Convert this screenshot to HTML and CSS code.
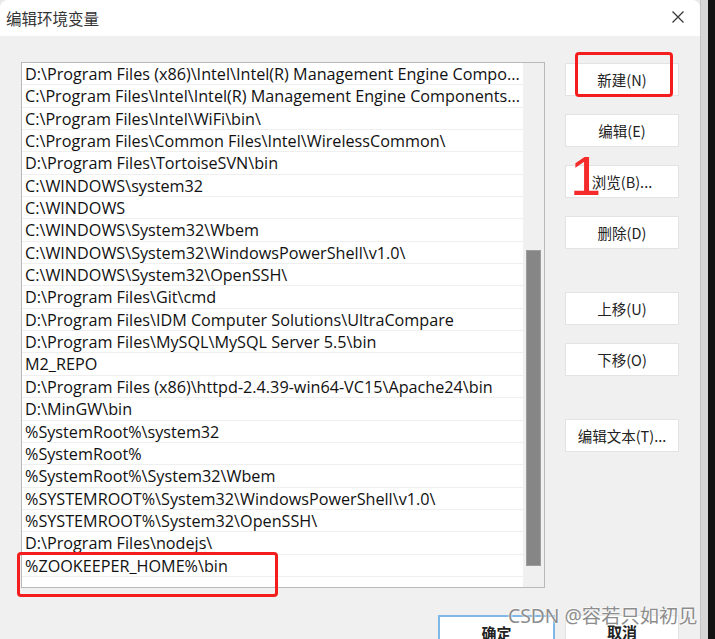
FILE: index.html
```html
<!DOCTYPE html>
<html lang="zh-CN">
<head>
<meta charset="utf-8">
<title>编辑环境变量</title>
<link rel="stylesheet" href="styles.css">
</head>
<body>
<div class="screen">
  <div class="dialog">
    <div class="titlebar">
      <span class="title">编辑环境变量</span>
      <svg class="close" width="12" height="12" viewBox="0 0 12 12"><path d="M0.5 0.5 L11.5 11.5 M11.5 0.5 L0.5 11.5" stroke="#3a3a3a" stroke-width="1.3" fill="none"/></svg>
    </div>
    <div class="body">
      <div class="main">
        <div class="list">
          <div class="rows">
            <div class="row">D:\Program Files (x86)\Intel\Intel(R) Management Engine Compo...</div>
            <div class="row">C:\Program Files\Intel\Intel(R) Management Engine Components...</div>
            <div class="row">C:\Program Files\Intel\WiFi\bin\</div>
            <div class="row">C:\Program Files\Common Files\Intel\WirelessCommon\</div>
            <div class="row">D:\Program Files\TortoiseSVN\bin</div>
            <div class="row">C:\WINDOWS\system32</div>
            <div class="row">C:\WINDOWS</div>
            <div class="row">C:\WINDOWS\System32\Wbem</div>
            <div class="row">C:\WINDOWS\System32\WindowsPowerShell\v1.0\</div>
            <div class="row">C:\WINDOWS\System32\OpenSSH\</div>
            <div class="row">D:\Program Files\Git\cmd</div>
            <div class="row">D:\Program Files\IDM Computer Solutions\UltraCompare</div>
            <div class="row">D:\Program Files\MySQL\MySQL Server 5.5\bin</div>
            <div class="row">M2_REPO</div>
            <div class="row">D:\Program Files (x86)\httpd-2.4.39-win64-VC15\Apache24\bin</div>
            <div class="row">D:\MinGW\bin</div>
            <div class="row">%SystemRoot%\system32</div>
            <div class="row">%SystemRoot%</div>
            <div class="row">%SystemRoot%\System32\Wbem</div>
            <div class="row">%SYSTEMROOT%\System32\WindowsPowerShell\v1.0\</div>
            <div class="row">%SYSTEMROOT%\System32\OpenSSH\</div>
            <div class="row">D:\Program Files\nodejs\</div>
            <div class="row">%ZOOKEEPER_HOME%\bin</div>
          </div>
          <div class="scrollbar"><div class="thumb"></div></div>
        </div>
        <div class="buttons">
          <div class="group">
            <div class="btn">新建(N)</div>
            <div class="btn">编辑(E)</div>
            <div class="btn">浏览(B)...</div>
            <div class="btn">删除(D)</div>
          </div>
          <div class="group">
            <div class="btn">上移(U)</div>
            <div class="btn">下移(O)</div>
          </div>
          <div class="group">
            <div class="btn">编辑文本(T)...</div>
          </div>
        </div>
      </div>
      <div class="footer">
        <div class="btn wide default">确定</div>
        <div class="btn">取消</div>
      </div>
    </div>
    <div class="mark mark-new"></div>
    <div class="mark mark-row"></div>
    <div class="digit">1</div>
    <div class="watermark">CSDN @容若只如初见</div>
  </div>
  <div class="edge"><div class="edge-gray"></div><div class="edge-black"></div></div>
</div>
</body>
</html>
```
FILE: styles.css
```css
* { box-sizing: border-box; }
html, body { margin: 0; padding: 0; }
body { background: #e9e9e9; }
.screen {
  width: 715px;
  height: 639px;
  overflow: hidden;
  display: flex;
  background: #e9e9e9;
}
.dialog {
  position: relative;
  width: 700px;
  height: 639px;
  display: flex;
  flex-direction: column;
  background: #f0f0f0;
  border-radius: 8px 8px 0 0;
  overflow: hidden;
}
.titlebar {
  height: 36px;
  flex: none;
  background: #ffffff;
  display: flex;
  align-items: center;
  justify-content: space-between;
  padding: 0 16px 0 6px;
}
.title {
  font-family: "Noto Sans CJK SC", sans-serif;
  font-size: 15.5px;
  color: #333333;
  letter-spacing: 0;
}
.close { display: block; margin-top: -2px; }
.body {
  flex: 1;
  padding: 26px 0 0 21px;
}
.main { display: flex; }
.list {
  width: 524px;
  height: 526px;
  border: 1px solid #b9b9b9;
  background: #ffffff;
  display: flex;
}
.rows {
  width: 501px;
  display: flex;
  flex-direction: column;
}
.row {
  height: 22.35px;
  border-bottom: 1px solid #efefef;
  padding: 1px 0 0 3px;
  font-family: "Open Sans", "Noto Sans", sans-serif;
  font-size: 16.2px;
  line-height: 20.5px;
  color: #111111;
  white-space: nowrap;
  overflow: hidden;
}
.scrollbar {
  width: 21px;
  background: #f0f0f0;
  padding: 187px 0 0 3px;
}
.thumb {
  width: 15px;
  height: 316px;
  background: #868686;
  border: 1px solid #9c9c9c;
}
.buttons {
  margin: 1px 0 0 20px;
  display: flex;
  flex-direction: column;
  gap: 43px;
}
.group {
  display: flex;
  flex-direction: column;
  gap: 18px;
}
.btn {
  width: 114px;
  height: 33px;
  background: #ffffff;
  border: 1px solid #e3e3e3;
  display: flex;
  align-items: center;
  justify-content: center;
  font-family: "Noto Sans CJK SC", sans-serif;
  font-size: 14.5px;
  color: #222222;
}
.footer {
  margin-top: 27px;
  padding-left: 417px;
  display: flex;
  gap: 10px;
}
.footer .btn {
  height: 40px;
  align-items: flex-start;
  padding-top: 5px;
  font-size: 15px;
  font-weight: 700;
}
.btn.wide { width: 117px; }
.btn.default { border: 2px solid #7fb7e6; }
.mark {
  position: absolute;
  border: 3px solid #f41d1d;
  border-radius: 4px;
}
.mark-new { left: 575px; top: 52px; width: 98px; height: 45px; }
.mark-row { left: 17px; top: 552px; width: 261px; height: 45px; }
.digit {
  position: absolute;
  left: 570px;
  top: 148px;
  font-family: "Liberation Sans", Arial, sans-serif;
  font-size: 56px;
  line-height: 1;
  color: #f52a2a;
}
.watermark {
  position: absolute;
  left: 508px;
  top: 606px;
  font-family: "Noto Sans", "Noto Sans CJK SC", sans-serif;
  font-size: 19.3px;
  line-height: 1;
  color: #8d8d8d;
  text-shadow: 0 0 2px #ffffff, 0 0 2px #ffffff;
  white-space: nowrap;
}
.edge { display: flex; flex: none; }
.edge-gray { width: 8px; background: #d6d6d6; border-left: 1px solid #c4c4c4; }
.edge-black { width: 7px; background: #121212; }
```
